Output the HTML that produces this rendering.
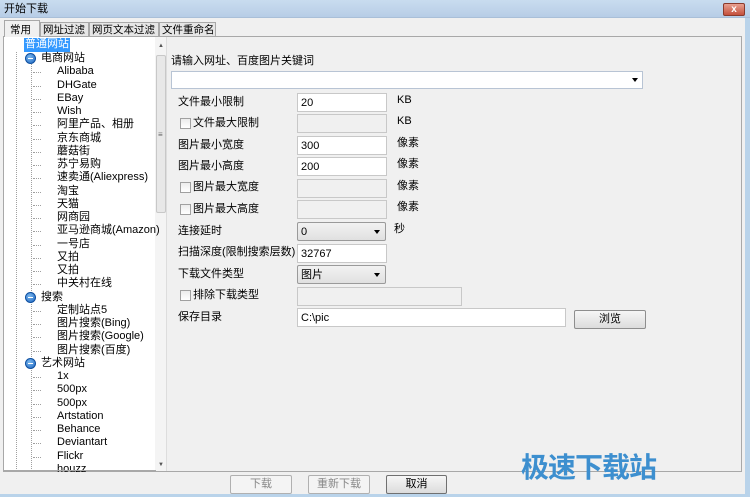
<!DOCTYPE html>
<html><head><meta charset="utf-8"><style>
*{margin:0;padding:0;box-sizing:border-box}
body{width:750px;height:497px;overflow:hidden;background:#f0f0f0;font-family:"Liberation Sans","Noto Sans CJK SC",sans-serif;font-size:11px;line-height:13px;color:#000;position:relative}
.a{position:absolute;white-space:nowrap;line-height:13px}
.title{left:0;top:0;width:750px;height:18px;background:linear-gradient(#c9dcef,#b7cde6);border-bottom:1px solid #a9bfd8}
.inp{position:absolute;height:19px;background:#fff;border:1px solid #c8c8c8;padding:3px 3px;font-size:11px;line-height:13px;white-space:nowrap}
.dis{background:#f0f0f0;border-color:#c8c8c8}
.cb{position:absolute;width:11px;height:11px;border:1px solid #a0a0a0;background:linear-gradient(#ececec,#fff)}
.btn{position:absolute;height:19px;border:1px solid #b0b0b0;border-radius:2px;background:#f4f4f4;text-align:center;line-height:17px;color:#888;white-space:nowrap}
.sel{position:absolute;height:19px;border:1px solid #9a9a9a;border-radius:2px;background:linear-gradient(#f2f2f2,#e0e0e0);padding:3px 3px;line-height:13px}
.sel:after{content:"";position:absolute;right:5px;top:7px;border:3.5px solid transparent;border-top:4px solid #000}
.ic{position:absolute;width:11px;height:11px;border-radius:50%;background:radial-gradient(circle at 40% 35%,#7ab8ef,#1f66c0);border:1px solid #0d4fa0}
.ic:after{content:"";position:absolute;left:2px;top:4px;width:5px;height:1px;background:#fff}
.t{position:absolute;font-size:11px;line-height:13px;white-space:nowrap}
.tab{position:absolute;white-space:nowrap;line-height:13px;font-size:10.5px;overflow:hidden}
</style></head><body>
<div class="a title"></div>
<div class="a" style="left:4px;top:3px;font-size:11px">开始下载</div>
<div class="a" style="left:723px;top:3px;width:22px;height:13px;background:linear-gradient(#e8a090,#c4503c);border:1px solid #8a3a2c;border-radius:2px;color:#fff;font-size:10px;font-weight:bold;text-align:center;line-height:11px">x</div>
<div class="a" style="left:745px;top:18px;width:5px;height:479px;background:#b9d3ea"></div>
<div class="a" style="left:0;top:494px;width:750px;height:3px;background:#b9d3ea"></div>
<!-- tabs -->
<div class="a" style="left:3px;top:36px;width:739px;height:436px;border:1px solid #a8a8a8;background:#f0f0f0"></div>
<div class="tab" style="left:4px;top:20px;width:36px;height:18px;background:#f0f0f0;border:1px solid #a8a8a8;border-bottom:none;padding:3px 5px">常用</div>
<div class="tab" style="left:40px;top:22px;width:49px;height:15px;background:#e6e6e6;border:1px solid #a8a8a8;padding:1px 2px">网址过滤</div>
<div class="tab" style="left:89px;top:22px;width:70px;height:15px;background:#e6e6e6;border:1px solid #a8a8a8;padding:1px 2px">网页文本过滤</div>
<div class="tab" style="left:159px;top:22px;width:57px;height:15px;background:#e6e6e6;border:1px solid #a8a8a8;padding:1px 2px">文件重命名</div>
<!-- tree -->
<div class="a" style="left:4px;top:37px;width:152px;height:434px;background:#fff;border-right:1px solid #ddd"></div>
<div class="a" style="left:155px;top:37px;width:12px;height:434px;background:#f4f4f4;border-right:1px solid #ddd"></div>
<div class="a" style="left:156px;top:55px;width:10px;height:158px;background:#e8e8e8;border:1px solid #c8c8c8;border-radius:2px"></div>
<div class="a" style="left:158px;top:128px;font-size:8px;color:#666">≡</div>
<div class="a" style="left:158px;top:40px;font-size:6px;color:#555">▲</div>
<div class="a" style="left:158px;top:459px;font-size:6px;color:#555">▼</div>
<div class="a" style="left:16px;top:52px;height:419px;border-left:1px dotted #a0a0a0"></div>
<div class="a" style="left:31px;top:64px;height:407px;border-left:1px dotted #a0a0a0"></div>
<div class="a" style="left:24px;top:38px;width:46px;height:14px;background:#3399ff;color:#fff;padding:0 1px">普通网站</div>
<div id="tree"></div>
<script>
var rows=[["c","电商网站"],["","Alibaba"],["","DHGate"],["","EBay"],["","Wish"],["","阿里产品、相册"],["","京东商城"],["","蘑菇街"],["","苏宁易购"],["","速卖通(Aliexpress)"],["","淘宝"],["","天猫"],["","网商园"],["","亚马逊商城(Amazon)"],["","一号店"],["","又拍"],["","又拍"],["","中关村在线"],["c","搜索"],["","定制站点5"],["","图片搜索(Bing)"],["","图片搜索(Google)"],["","图片搜索(百度)"],["c","艺术网站"],["","1x"],["","500px"],["","500px"],["","Artstation"],["","Behance"],["","Deviantart"],["","Flickr"],["","houzz"]];
var h="";rows.forEach(function(r,i){var y=Math.round(52+i*13.25);
if(r[0]){h+='<div class="ic" style="left:25px;top:'+(y+1)+'px"></div><div class="t" style="left:41px;top:'+y+'px">'+r[1]+'</div>';}
else{h+='<div class="a" style="left:33px;top:'+(y+7)+'px;width:8px;border-top:1px dotted #a0a0a0"></div><div class="t" style="left:57px;top:'+y+'px">'+r[1]+'</div>';}});
document.getElementById("tree").innerHTML=h;
</script>
<div class="a" style="left:4px;top:470px;width:152px;height:1px;background:#a8a8a8"></div>
<!-- form -->
<div class="a" style="left:171px;top:55px">请输入网址、百度图片关键词</div>
<div class="inp" style="left:171px;top:71px;width:472px;height:18px;border-color:#b8c4d4"></div>
<div class="a" style="left:632px;top:78px;border:3.5px solid transparent;border-top:4px solid #000"></div>
<div class="a" style="left:178px;top:96px">文件最小限制</div>
<div class="inp" style="left:297px;top:93px;width:90px">20</div>
<div class="a" style="left:397px;top:94px">KB</div>
<div class="cb" style="left:180px;top:118px"></div><div class="a" style="left:193px;top:117px">文件最大限制</div>
<div class="inp dis" style="left:297px;top:114px;width:90px"></div>
<div class="a" style="left:397px;top:115px">KB</div>
<div class="a" style="left:178px;top:139px">图片最小宽度</div>
<div class="inp" style="left:297px;top:136px;width:90px">300</div>
<div class="a" style="left:397px;top:137px">像素</div>
<div class="a" style="left:178px;top:160px">图片最小高度</div>
<div class="inp" style="left:297px;top:157px;width:90px">200</div>
<div class="a" style="left:397px;top:158px">像素</div>
<div class="cb" style="left:180px;top:182px"></div><div class="a" style="left:193px;top:181px">图片最大宽度</div>
<div class="inp dis" style="left:297px;top:179px;width:90px"></div>
<div class="a" style="left:397px;top:180px">像素</div>
<div class="cb" style="left:180px;top:204px"></div><div class="a" style="left:193px;top:203px">图片最大高度</div>
<div class="inp dis" style="left:297px;top:200px;width:90px"></div>
<div class="a" style="left:397px;top:201px">像素</div>
<div class="a" style="left:178px;top:225px">连接延时</div>
<div class="sel" style="left:297px;top:222px;width:89px">0</div>
<div class="a" style="left:394px;top:223px">秒</div>
<div class="a" style="left:178px;top:246px">扫描深度(限制搜索层数)</div>
<div class="inp" style="left:297px;top:244px;width:90px">32767</div>
<div class="a" style="left:178px;top:268px">下载文件类型</div>
<div class="sel" style="left:297px;top:265px;width:89px">图片</div>
<div class="cb" style="left:180px;top:290px"></div><div class="a" style="left:193px;top:289px">排除下载类型</div>
<div class="inp dis" style="left:297px;top:287px;width:165px"></div>
<div class="a" style="left:178px;top:311px">保存目录</div>
<div class="inp" style="left:297px;top:308px;width:269px">C:\pic</div>
<div class="btn" style="left:574px;top:310px;width:72px;color:#000;background:linear-gradient(#f6f6f6,#dcdcdc);border-color:#8e8e8e">浏览</div>
<!-- bottom -->
<div class="btn" style="left:230px;top:475px;width:62px">下载</div>
<div class="btn" style="left:308px;top:475px;width:62px">重新下载</div>
<div class="btn" style="left:386px;top:475px;width:61px;color:#000;background:linear-gradient(#f6f6f6,#dcdcdc);border-color:#707070">取消</div>
<div class="a" style="left:521px;top:448px;font-size:28px;font-weight:bold;color:#3d8fcf;letter-spacing:-1px;font-family:'Noto Sans CJK SC',sans-serif;line-height:36px">极速下载站</div>
</body></html>
